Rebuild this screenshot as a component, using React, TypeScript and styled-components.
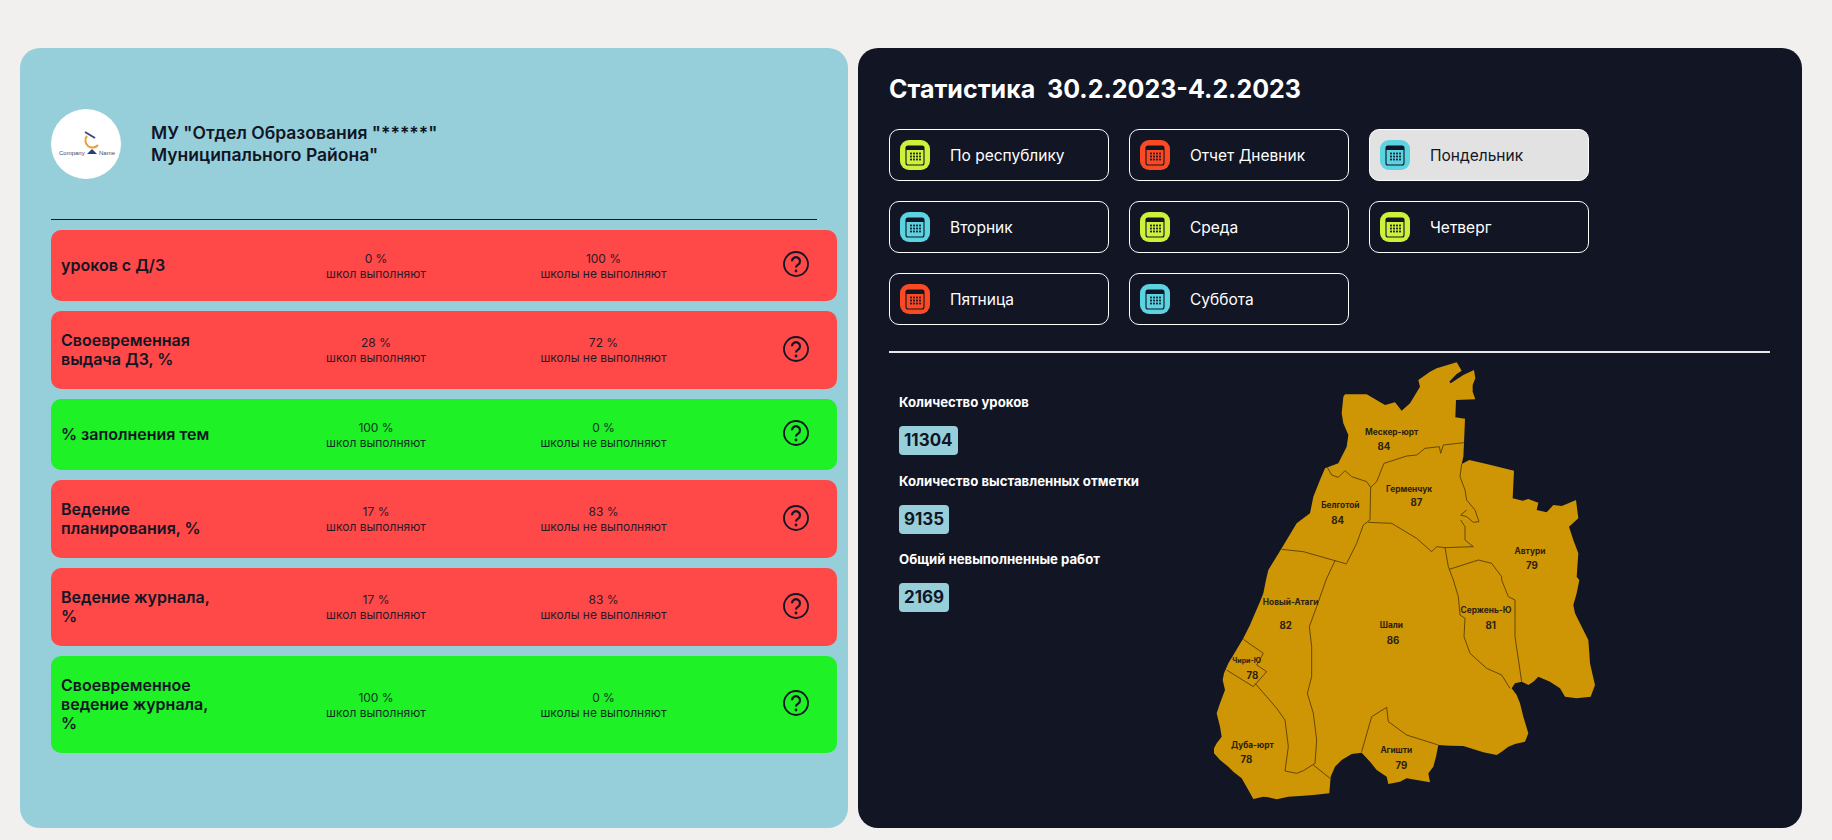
import React from "react";
import styled, { createGlobalStyle } from "styled-components";

const GlobalStyle = createGlobalStyle`
  html, body {
    margin: 0;
    background: #f1f0ee;
    font-family: "Inter", "Noto Sans", sans-serif;
  }
`;

const ROWS = [
  { title: "уроков с Д/З", done: 0, ok: false },
  { title: "Своевременная выдача ДЗ, %", done: 28, ok: false },
  { title: "% заполнения тем", done: 100, ok: true },
  { title: "Ведение планирования, %", done: 17, ok: false },
  { title: "Ведение журнала, %", done: 17, ok: false },
  { title: "Своевременное ведение журнала, %", done: 100, ok: true },
];

const LIME = "#cdf03a";
const ORANGE = "#fa4a24";
const CYAN = "#5bd3e0";

const TABS = [
  { label: "По республику", color: LIME },
  { label: "Отчет Дневник", color: ORANGE },
  { label: "Пондельник", color: CYAN, active: true },
  { label: "Вторник", color: CYAN },
  { label: "Среда", color: LIME },
  { label: "Четверг", color: LIME },
  { label: "Пятница", color: ORANGE },
  { label: "Суббота", color: CYAN },
];

const STATS = [
  { label: "Количество уроков", value: 11304 },
  { label: "Количество выставленных отметки", value: 9135 },
  { label: "Общий невыполненные работ", value: 2169 },
];

// traced from the reference, 3 units = 1px
const OUTLINE =
  "M770 37L785 62L770 72L748 95L752 100L790 75L822 60L826 85L818 105L818 125L826 148L768 150L766 202L795 206L792 280L790 320L785 342L808 330L860 342L942 362L938 445L968 452L985 447L1015 458L1010 480L1040 487L1060 465L1085 468L1100 462L1128 450L1135 505L1107 530L1120 570L1135 610L1130 680L1138 690L1130 730L1120 765L1125 790L1135 810L1150 840L1165 870L1168 910L1170 940L1178 975L1185 1005L1172 1040L1130 1045L1095 1040L1080 1015L1050 995L1015 980L1000 995L985 1005L965 995L945 1000L935 1015L950 1035L960 1060L970 1100L985 1150L975 1175L945 1182L925 1190L905 1205L890 1215L850 1207L790 1188L750 1187L715 1185L708 1220L700 1250L685 1270L690 1297L650 1290L620 1285L600 1295L565 1302L560 1280L530 1260L510 1235L485 1208L455 1212L425 1230L405 1250L392 1280L388 1330L340 1335L300 1338L265 1340L230 1348L205 1342L190 1340L160 1347L145 1320L125 1285L100 1265L85 1250L60 1230L42 1210L42 1195L50 1180L65 1160L60 1130L50 1090L60 1060L75 1020L68 990L72 970L85 940L100 915L130 865L150 825L165 790L180 755L190 730L198 690L205 660L245 595L290 520L330 490L340 440L360 390L375 355L415 340L440 290L445 255L430 220L425 190L430 140L435 133L500 133L555 165L585 157L605 182L630 160L660 110L655 90L690 65L710 55Z";

const BORDERS = [
  "M382 352L395 375L415 382L435 362L455 380L500 395L512 412L530 395L552 340L620 318L650 315L675 295L718 290L722 310L730 285L792 278",
  "M512 412L510 510L490 525L470 580L440 640",
  "M245 598L310 605L405 632L440 642",
  "M505 517L575 520L650 565L695 605L710 590L735 593L820 590",
  "M785 342L780 380L795 420L800 450L825 480L837 515L820 517L800 500L782 495L800 480M782 510L795 530L795 570L820 590",
  "M735 593L745 650L760 690L775 740L780 795L795 805L792 860L810 910L860 955L905 975L930 1015",
  "M748 658L835 630L875 640L905 680L905 690L925 740L945 750L945 860L965 995",
  "M405 632L378 690L350 770L328 830L335 890L335 980L322 1030L340 1090L350 1170L345 1240L310 1262L290 1270L255 1263L265 1190L255 1110L230 1075L200 1040L165 1000",
  "M130 868L190 910L170 945L200 965L160 1010L80 960",
  "M340 1245L390 1285",
  "M485 1205L515 1100L560 1072L565 1115L620 1155L715 1185",
];

const DISTRICTS = [
  { name: "Мескер-юрт", score: 84, x: 575, y: 246, sx: 552, sy: 290 },
  { name: "Белготой", score: 84, x: 421, y: 467, sx: 413, sy: 511 },
  { name: "Герменчук", score: 87, x: 627, y: 417, sx: 649, sy: 457 },
  { name: "Автури", score: 79, x: 990, y: 603, sx: 996, sy: 647 },
  { name: "Новый-Атаги", score: 82, x: 272, y: 758, sx: 257, sy: 827 },
  { name: "Шали", score: 86, x: 574, y: 827, sx: 579, sy: 871 },
  { name: "Сержень-Ю", score: 81, x: 858, y: 782, sx: 872, sy: 827 },
  { name: "Чири-Ю", score: 78, x: 140, y: 932, sx: 157, sy: 977, small: true },
  { name: "Дуба-юрт", score: 78, x: 157, y: 1185, sx: 139, sy: 1228 },
  { name: "Агишти", score: 79, x: 589, y: 1202, sx: 604, sy: 1247 },
];

const CalendarIcon = ({ color }: { color: string }) => (
  <IconTile $color={color}>
    <svg width="20" height="21" viewBox="0 0 20 21">
      <rect x="1" y="1" width="18" height="19" rx="2" fill="none" stroke="#111524" strokeWidth="1.1" />
      <rect x="1" y="1" width="18" height="4" fill="#111524" />
      {[8.5, 11.5, 14.5].map((cy) =>
        [6, 9, 12, 15].map((cx) => (
          <rect key={`${cx}-${cy}`} x={cx - 0.9} y={cy - 0.9} width="1.8" height="1.8" fill="#111524" />
        ))
      )}
    </svg>
  </IconTile>
);

const HelpIcon = () => (
  <HelpButton>
    <svg width="26" height="26" viewBox="0 0 26 26" fill="none" stroke="#111524">
      <circle cx="13" cy="13" r="12" strokeWidth="1.8" />
      <path d="M9 10.2a4 4 0 1 1 6.1 3.4c-1.4.8-2.1 1.4-2.1 3" strokeWidth="2.2" />
      <circle cx="13" cy="20" r="1.4" fill="#111524" stroke="none" />
    </svg>
  </HelpButton>
);

const Logo = () => (
  <LogoCircle>
    <svg width="70" height="70" viewBox="0 0 70 70">
      <path d="M36 27A7 7 0 1 0 47 36" fill="none" stroke="#e9a23b" strokeWidth="2" />
      <path d="M34 23L44 29" stroke="#3a4a7a" strokeWidth="2" />
      <path d="M36 45L41 40L46 45Z" fill="#2f3d6e" />
      <text x="8" y="46" fontSize="6" fill="#3a4a7a">Company</text>
      <text x="48" y="46" fontSize="6" fill="#3a4a7a">Name</text>
    </svg>
  </LogoCircle>
);

const App = () => {
  return (
    <Page>
      <GlobalStyle />
      <LeftPanel>
        <Header>
          <Logo />
          <OrgName>
            МУ "Отдел Образования "*****"
            <br />
            Муниципального Района"
          </OrgName>
        </Header>
        <LeftDivider />
        <RowList>
          {ROWS.map((r) => (
            <Row key={r.title} $ok={r.ok}>
              <RowTitle>{r.title}</RowTitle>
              <Cell>
                {r.done} %
                <br />
                школ выполняют
              </Cell>
              <Cell>
                {100 - r.done} %
                <br />
                школы не выполняют
              </Cell>
              <HelpIcon />
            </Row>
          ))}
        </RowList>
      </LeftPanel>
      <RightPanel>
        <PanelTitle>Статистика&nbsp; 30.2.2023-4.2.2023</PanelTitle>
        <TabGrid>
          {TABS.map((t) => (
            <Tab key={t.label} $active={t.active}>
              <CalendarIcon color={t.color} />
              {t.label}
            </Tab>
          ))}
        </TabGrid>
        <RightDivider />
        <Body>
          <StatList>
            {STATS.map((s) => (
              <div key={s.label}>
                <StatLabel>{s.label}</StatLabel>
                <StatValue>{s.value}</StatValue>
              </div>
            ))}
          </StatList>
          <MapSvg viewBox="0 30 1260 1380" width="420" height="460">
            <path d={OUTLINE} fill="#ce9505" />
            {BORDERS.map((d) => (
              <path key={d} d={d} fill="none" stroke="#4a3500" strokeWidth="2.4" />
            ))}
            {DISTRICTS.map((d) => (
              <g key={d.name} fill="#2a2210" fontWeight="700" textAnchor="middle">
                <text x={d.x} y={d.y + 8} fontSize={d.small ? 21 : 25}>{d.name}</text>
                <text x={d.sx} y={d.sy + 10} fontSize="29">{d.score}</text>
              </g>
            ))}
          </MapSvg>
        </Body>
      </RightPanel>
    </Page>
  );
};

const Page = styled.div`
  display: flex;
  gap: 10px;
  padding: 48px 30px 12px 20px;
`;

const LeftPanel = styled.section`
  box-sizing: border-box;
  width: 828px;
  height: 780px;
  padding: 61px 11px 0 31px;
  background: #96cfda;
  border-radius: 20px;
`;

const Header = styled.header`
  display: flex;
  align-items: center;
  gap: 30px;
`;

const LogoCircle = styled.div`
  width: 70px;
  height: 70px;
  border-radius: 50%;
  background: #fff;
  svg {
    display: block;
    font-family: "Liberation Sans", sans-serif;
  }
`;

const OrgName = styled.h1`
  margin: 0;
  font-size: 17.5px;
  line-height: 22px;
  font-weight: 600;
  color: #111524;
`;

const LeftDivider = styled.hr`
  margin: 40px 20px 10px 0;
  border: 0;
  height: 1px;
  background: #111524;
`;

const RowList = styled.div`
  display: flex;
  flex-direction: column;
  gap: 10px;
`;

const Row = styled.div<{ $ok: boolean }>`
  display: grid;
  grid-template-columns: 201px 228px 227px 120px;
  align-items: center;
  box-sizing: border-box;
  min-height: 71px;
  padding: 20px 0 20px 10px;
  border-radius: 10px;
  background: ${(p) => (p.$ok ? "#1ef126" : "#ff4848")};
  color: #111524;
`;

const RowTitle = styled.div`
  max-width: 160px;
  font-size: 16px;
  line-height: 19px;
  font-weight: 600;
`;

const Cell = styled.div`
  font-size: 12px;
  line-height: 15px;
  text-align: center;
  opacity: 0.9;
`;

const HelpButton = styled.div`
  justify-self: end;
  display: flex;
  margin: 0 28px 3px 0;
`;

const RightPanel = styled.section`
  box-sizing: border-box;
  width: 944px;
  height: 780px;
  padding: 27px 31px 0;
  background: #111524;
  border-radius: 20px;
  color: #fff;
`;

const PanelTitle = styled.h2`
  margin: 0;
  font-size: 25px;
  line-height: 28px;
  font-weight: 700;
`;

const TabGrid = styled.div`
  display: grid;
  grid-template-columns: repeat(3, 220px);
  gap: 20px;
  margin-top: 26px;
`;

const Tab = styled.div<{ $active?: boolean }>`
  display: flex;
  align-items: center;
  gap: 20px;
  box-sizing: border-box;
  height: 52px;
  padding-left: 10px;
  border: 1px solid #fff;
  border-radius: 10px;
  font-size: 15.5px;
  background: ${(p) => (p.$active ? "#e2e2e2" : "transparent")};
  color: ${(p) => (p.$active ? "#111524" : "#fff")};
`;

const IconTile = styled.span<{ $color: string }>`
  display: flex;
  align-items: center;
  justify-content: center;
  width: 30px;
  height: 30px;
  border-radius: 9px;
  background: ${(p) => p.$color};
`;

const RightDivider = styled.hr`
  margin: 26px 0 0;
  border: 0;
  height: 2px;
  width: 881px;
  background: #e8e8ea;
`;

const Body = styled.div`
  display: flex;
`;

const StatList = styled.div`
  width: 311px;
  padding: 40px 0 0 10px;
  box-sizing: border-box;
  display: flex;
  flex-direction: column;
  gap: 16.5px;
`;

const StatLabel = styled.div`
  font-size: 13.2px;
  line-height: 18px;
  font-weight: 700;
`;

const StatValue = styled.div`
  display: table;
  margin-top: 15px;
  padding: 0 5px;
  height: 29px;
  line-height: 29px;
  border-radius: 4px;
  background: #96cfda;
  color: #111524;
  font-size: 17px;
  font-weight: 700;
`;

const MapSvg = styled.svg`
  display: block;
  margin-top: 7px;
`;

export default App;
